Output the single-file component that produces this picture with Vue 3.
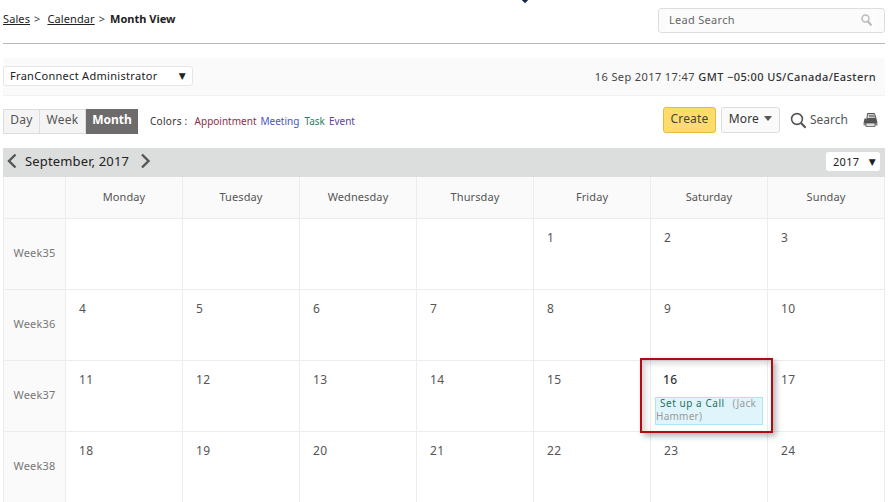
<script setup>
const days = ['Monday','Tuesday','Wednesday','Thursday','Friday','Saturday','Sunday']
const weeks = [
  { name: 'Week35', cells: ['', '', '', '', '1', '2', '3'] },
  { name: 'Week36', cells: ['4', '5', '6', '7', '8', '9', '10'] },
  { name: 'Week37', cells: ['11', '12', '13', '14', '15', '16', '17'] },
  { name: 'Week38', cells: ['18', '19', '20', '21', '22', '23', '24'] },
]
</script>

<template>
  <div class="page">
    <span class="notch"></span>
    <header class="top">
      <div class="crumbs">
        <a class="crumb">Sales</a><span class="sep">&gt;</span>
        <a class="crumb">Calendar</a><span class="sep">&gt;</span>
        <b>Month View</b>
      </div>
      <div class="lead">
        <div class="lead-inner">
          <span>Lead Search</span>
          <svg width="11" height="12" viewBox="0 0 11 12" fill="none" stroke="#bbb" stroke-width="1.5">
            <circle cx="4.500" cy="4.500" r="3.500" />
            <path d="M7 7.500 10.400 11.400" stroke-width="2.200" />
          </svg>
        </div>
      </div>
    </header>

    <section class="filter">
      <div class="owner"><span>FranConnect Administrator</span><i class="caret">▼</i></div>
      <div class="tz">16 Sep 2017 17:47 <span class="gmt">GMT −05:00 US/Canada/Eastern</span></div>
    </section>

    <section class="tools">
      <div class="tabs">
        <span class="tab t-day">Day</span><span class="tab t-week">Week</span><span class="tab active">Month</span>
      </div>
      <div class="legend">
        <span class="lg-label">Colors :</span>
        <span class="c-app">Appointment</span>
        <span class="c-meet">Meeting</span>
        <span class="c-task">Task</span>
        <span class="c-event">Event</span>
      </div>
      <div class="actions">
        <button class="create">Create</button>
        <button class="more">More <i class="down"></i></button>
        <span class="search">
          <svg width="17" height="17" viewBox="0 0 17 17" fill="none" stroke="#555">
            <circle cx="7" cy="7" r="5.400" stroke-width="1.600" />
            <path d="M11 11 15.600 15.800" stroke-width="2.200" />
          </svg>
          Search
        </span>
        <svg class="print" width="15" height="14" viewBox="0 0 15 14">
          <path d="M4.500 .5h7l1.500 5H4z" fill="#eee" stroke="#555" />
          <path d="M5.500 2.200h6M6 3.800h6" stroke="#666" />
          <path d="M1.500 5.500h12l1 4.500H.500z" fill="#555" />
          <path d="M.5 10h14v2.500H.500z" fill="#8a8a8a" />
          <path d="M3 10h9v3.500H3z" fill="#ddd" stroke="#444" stroke-width=".7" />
        </svg>
      </div>
    </section>

    <section class="bar">
      <svg width="11" height="16" viewBox="0 0 11 16" fill="none" stroke="#555" stroke-width="2.400"><path d="M9.500 1.500 3 8 9.500 14.500" /></svg>
      <span class="month">September, 2017</span>
      <svg class="next" width="11" height="16" viewBox="0 0 11 16" fill="none" stroke="#555" stroke-width="2.400"><path d="M2 1.500 8.500 8 2 14.500" /></svg>
      <div class="year"><span>2017</span><i class="caret">▼</i></div>
    </section>

    <section class="grid">
      <div class="head corner"></div>
      <div v-for="d in days" :key="d" class="head">{{ d }}</div>
      <template v-for="w in weeks" :key="w.name">
        <div class="week">{{ w.name }}</div>
        <div v-for="(c, i) in w.cells" :key="i" class="cell">
          <span class="num" :class="{ today: c === '16' }">{{ c }}</span>
          <div v-if="c === '16'" class="event"><div class="event-text"><span class="ev-title">Set up a Call</span> &nbsp;(Jack Hammer)</div></div>
        </div>
      </template>
    </section>
    <div class="highlight"></div>
  </div>
</template>

<style>
html, body { margin: 0; background: #fff; overflow: hidden; }
</style>

<style scoped>
.page {
  position: relative;
  width: 895px;
  height: 502px;
  overflow: hidden;
  box-sizing: border-box;
  padding-left: 3px;
  padding-right: 10px;
  font-family: "Noto Sans", "DejaVu Sans", sans-serif;
  font-size: 11px;
  letter-spacing: .3px;
  color: #333;
}
.notch {
  position: absolute;
  left: 522px;
  top: -4px;
  width: 6px;
  height: 6px;
  background: #14284f;
  transform: rotate(45deg);
}
.top {
  height: 43px;
  border-bottom: 1px solid #bbb;
  display: flex;
  justify-content: space-between;
  align-items: flex-start;
}
.crumbs {
  margin-top: 11px;
  line-height: 15px;
  color: #222;
  letter-spacing: .1px;
}
.crumb { text-decoration: underline; }
.sep { margin: 0 7px 0 4px; color: #444; }
.crumbs b { font-weight: 700; letter-spacing: 0; margin-left: -2px; }
.lead {
  margin-top: 8px;
  width: 227px;
  height: 25px;
  box-sizing: border-box;
  border: 1px solid #ddd;
  border-radius: 3px;
  background: #fbfbfb;
  padding: 0 10px 0 9px;
  color: #666;
}
.lead-inner {
  height: 100%;
  display: flex;
  align-items: center;
  justify-content: space-between;
  border-left: 1px solid #fff;
  border-right: 1px solid #fff;
  padding-right: 1px;
  padding-bottom: 2px;
  box-sizing: border-box;
}
.filter {
  margin-top: 14px;
  height: 37px;
  background: #fafafa;
  border-bottom: 1px solid #f2f2f2;
  display: flex;
  align-items: center;
  justify-content: space-between;
  padding-right: 9px;
}
.owner {
  width: 190px;
  height: 20px;
  box-sizing: border-box;
  background: #fff;
  border: 1px solid #e6e6e6;
  border-radius: 3px;
  display: flex;
  align-items: center;
  justify-content: space-between;
  padding: 0 6px;
  margin-top: -1px;
  color: #222;
  line-height: 16px;
}
.caret {
  font-style: normal;
  font-size: 9px;
  color: #222;
  font-family: "DejaVu Sans", sans-serif;
}
.tz { color: #444; margin-top: -1px; letter-spacing: .4px; }
.gmt { color: #333; font-weight: 500; }
.tools {
  margin-top: 12px;
  height: 26px;
  display: flex;
  align-items: center;
}
.tabs { display: flex; height: 25px; margin-top: 0; }
.tab {
  display: flex;
  align-items: center;
  justify-content: center;
  border: 1px solid #ddd;
  background: #f4f4f4;
  font-size: 12px;
  color: #555;
  box-sizing: border-box;
  padding-bottom: 4px;
}
.t-day { width: 37px; }
.t-week { width: 46px; border-left: 0; }
.tab.active {
  width: 52px;
  background: #6d6b6b;
  border-color: #6d6b6b;
  color: #fff;
  font-weight: 700;
  letter-spacing: 0;
}
.legend {
  margin-left: 12px;
  font-size: 10px;
  display: flex;
  gap: 4px;
  color: #333;
  margin-top: -1px;
  letter-spacing: 0;
}
.lg-label { margin-right: 3px; letter-spacing: .3px; }
.c-app { color: #8a2f4a; }
.c-meet { color: #4a55c0; margin-right: 1px; }
.c-task { color: #2c7d66; }
.c-event { color: #5c3fa0; }
.actions {
  margin-left: auto;
  display: flex;
  align-items: center;
}
.actions button {
  font-family: inherit;
  font-size: 12px;
  letter-spacing: .2px;
  height: 26px;
  box-sizing: border-box;
  border-radius: 3px;
  padding: 0 0 3px;
  margin-top: -2px;
}
.create {
  width: 53px;
  background: #fddc6b;
  border: 1px solid #e5bd3a;
  color: #444;
}
.more {
  width: 59px;
  margin-left: 5px;
  background: #fafafa;
  border: 1px solid #ddd;
  color: #333;
}
.down {
  display: inline-block;
  margin-left: 2px;
  vertical-align: 2px;
  border-left: 4px solid transparent;
  border-right: 4px solid transparent;
  border-top: 5px solid #555;
}
.search {
  display: flex;
  align-items: center;
  gap: 3px;
  margin-left: 10px;
  font-size: 12px;
  color: #555;
  margin-top: -4px;
  letter-spacing: 0;
}
.search svg { margin-top: 3px; }
.print { margin-left: 15px; margin-right: 7px; margin-top: -3px; }
.bar {
  margin-top: 14px;
  height: 29px;
  background: #dcdddd;
  display: flex;
  align-items: center;
  padding: 0 5px 4px 3px;
  box-sizing: border-box;
  gap: 5px;
}
.month { font-size: 13px; color: #222; margin: 0 3px; letter-spacing: .15px; }
.next { margin-left: 3px; }
.year {
  margin-left: auto;
  width: 54px;
  height: 19px;
  box-sizing: border-box;
  background: #fff;
  border-radius: 3px;
  display: flex;
  align-items: center;
  justify-content: space-between;
  padding: 0 4px 0 7px;
  color: #222;
  margin-top: 2px;
}
.grid {
  display: grid;
  grid-template-columns: 63px repeat(7, 117px);
  grid-template-rows: 42px repeat(4, 71px);
}
.head, .week {
  background: #fafafa;
  color: #555;
  display: flex;
  align-items: center;
  justify-content: center;
  box-sizing: border-box;
  border-right: 1px solid #ececec;
  border-bottom: 1px solid #ececec;
  letter-spacing: .1px;
  padding-bottom: 3px;
}
.head.corner, .week { border-left: 1px solid #ececec; }
.week { color: #777; letter-spacing: .2px; }
.cell {
  box-sizing: border-box;
  border-right: 1px solid #ececec;
  border-bottom: 1px solid #ececec;
  padding: 11px 0 0 13px;
  font-size: 12px;
  line-height: 16px;
  color: #555;
}
.num.today { font-weight: 500; color: #333; }
.cell:has(.today) { padding-left: 12px; }
.event {
  margin: 9px 4px 0 -8px;
  height: 28px;
  width: 108px;
  box-sizing: border-box;
  background: #e0f5fb;
  border: 1px solid #aee5ef;
  font-size: 10px;
  line-height: 13px;
  color: #9a9a9a;
  letter-spacing: .25px;
}
.event-text { margin-top: -1px; text-indent: 4px; }
.ev-title { color: #2a6f5c; letter-spacing: .55px; margin-right: 2px; }
.highlight {
  position: absolute;
  left: 640px;
  top: 358px;
  width: 133px;
  height: 75px;
  box-sizing: border-box;
  border: 2px solid #b40a10;
  box-shadow: 3px 3px 6px rgba(0,0,0,.3), inset 3px 3px 6px rgba(0,0,0,.18);
  pointer-events: none;
}
</style>
